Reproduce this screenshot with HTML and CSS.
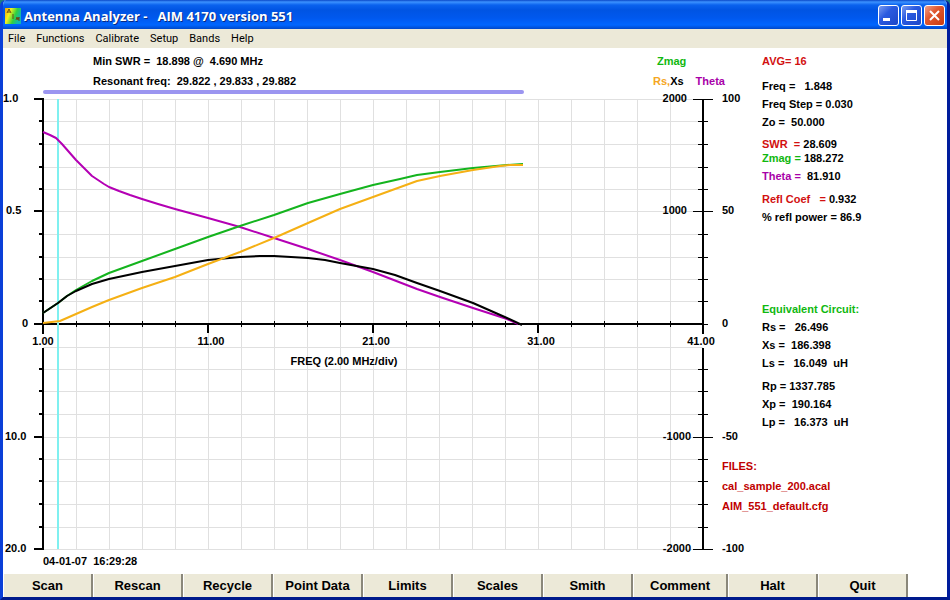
FILE: index.html
```html
<!DOCTYPE html>
<html lang="en">
<head>
    <meta charset="UTF-8">
    <meta name="viewport" content="width=device-width, initial-scale=1.0">
    <title>Antenna Analyzer - AIM 4170 version 551</title>
    <link rel="stylesheet" href="styles.css">
</head>
<body>
    <div class="window">
        <header class="titlebar">
            <svg class="app-icon" width="16" height="16" viewBox="0 0 16 16">
                <defs>
                    <linearGradient id="rainbow" x1="0" y1="0" x2="1" y2="0.4">
                        <stop offset="0" stop-color="#f0a010"/>
                        <stop offset="0.35" stop-color="#f4f020"/>
                        <stop offset="0.7" stop-color="#30d040"/>
                        <stop offset="1" stop-color="#10b8b0"/>
                    </linearGradient>
                </defs>
                <rect width="16" height="16" fill="url(#rainbow)"/>
                <path d="M2 5L4 1L6 5M3 4H5M8 6V11M11 12L12 9L13 12L14 9V13" fill="none" stroke="#6a4a10"/>
            </svg>
            <h1>Antenna Analyzer -   AIM 4170 version 551</h1>
            <div class="controls">
                <button class="ctl" aria-label="Minimize">
                    <svg width="19" height="19" viewBox="0 0 19 19"><path d="M4 13.5H11" stroke="#fff" stroke-width="3"/></svg>
                </button>
                <button class="ctl" aria-label="Maximize">
                    <svg width="19" height="19" viewBox="0 0 19 19"><path d="M4.5 5V14.5H14.5V5" fill="none" stroke="#fff"/><path d="M4 5.5H15" stroke="#fff" stroke-width="3"/></svg>
                </button>
                <button class="ctl ctl-close" aria-label="Close">
                    <svg width="19" height="19" viewBox="0 0 19 19"><path d="M5 5L14 14M14 5L5 14" stroke="#fff" stroke-width="2"/></svg>
                </button>
            </div>
        </header>

        <nav class="menu">
            <button>File</button>
            <button>Functions</button>
            <button>Calibrate</button>
            <button>Setup</button>
            <button>Bands</button>
            <button>Help</button>
        </nav>

        <main class="content">
            <section class="plot">
                <div class="plot-head">
                    <div>
                        <p>Min SWR =  18.898 @  4.690 MHz</p>
                        <p>Resonant freq:  29.822 , 29.833 , 29.882</p>
                    </div>
                    <div class="legend">
                        <p class="green legend-top">Zmag</p>
                        <p class="legend-row"><span><span class="orange">Rs,</span>Xs</span><span class="purple">Theta</span></p>
                    </div>
                </div>

                <svg class="chart" viewBox="3 90 719 462">
                    <path class="band" d="M45 92H522"/>

                    <!-- grid -->
                    <path class="grid" d="M76 99V549M109 99V549M142 99V549M175 99V549M208 99V549M241 99V549M274 99V549M307 99V549M340 99V549M373 99V549M406 99V549M439 99V549M472 99V549M505 99V549M538 99V549M571 99V549M604 99V549M637 99V549M670 99V549"/>
                    <path class="grid" d="M43 99H703M43 121H703M43 144H703M43 167H703M43 189H703M43 211H703M43 234H703M43 257H703M43 279H703M43 301H703M43 347H703M43 369H703M43 391H703M43 414H703M43 437H703M43 459H703M43 481H703M43 504H703M43 527H703M43 549H703"/>

                    <!-- left axis (SWR) -->
                    <path class="axis" d="M43 98V334M43 348V550"/>
                    <path class="axis" d="M34 99H43M34 211H43M34 324H43M34 437H43M34 549H43"/>
                    <path class="axis" d="M39 121H43M39 144H43M39 167H43M39 189H43M39 234H43M39 257H43M39 279H43M39 301H43M39 369H43M39 391H43M39 414H43M39 459H43M39 481H43M39 504H43M39 527H43"/>

                    <!-- frequency axis -->
                    <path class="axis" d="M43 324H703M208 324V333M373 324V333M538 324V333"/>
                    <path class="tick" d="M76 321V327M109 321V327M142 321V327M175 321V327M241 321V327M274 321V327M307 321V327M340 321V327M406 321V327M439 321V327M472 321V327M505 321V327M571 321V327M604 321V327M637 321V327M670 321V327"/>

                    <!-- right axis (Z / theta) -->
                    <path class="axis" d="M703 99V334M703 348V549"/>
                    <path class="tick" d="M693 99H713M693 211H713M693 437H713M693 549H713"/>
                    <path class="tick" d="M698 121H708M698 144H708M698 167H708M698 189H708M698 234H708M698 257H708M698 279H708M698 301H708M698 324H708M698 369H708M698 391H708M698 414H708M698 459H708M698 481H708M698 504H708M698 527H708"/>

                    <path class="cursor" d="M58 99V549"/>

                    <!-- traces -->
                    <polyline class="trace t-theta" points="43,132 50,135 56,138 62,144 69,152 76,160 83,167 92,176 98,180 104,184 109,187 119,191 130,195 142,199 158,204 175,209 208,218 240,227 274,238 308,249 340,260 373,272 417,289 440,297 473,308 507,319 518,324"/>
                    <polyline class="trace t-zmag" points="43,313 58,303 67,296 76,290 92,281 109,273 142,261 175,249 208,237 240,226 274,215 308,203 340,194 373,185 400,179 417,175 440,172 473,168 507,165 523,164"/>
                    <polyline class="trace t-xs" points="43,313 58,303 67,296 76,291 92,284 109,279 142,272 175,266 208,260 240,257 260,256 274,256 308,258 325,260 340,263 373,269 395,275 417,283 440,291 473,303 507,318 522,325"/>
                    <polyline class="trace t-rs" points="43,323 60,321 76,314 92,307 109,300 142,288 175,277 208,264 240,252 274,238 308,223 340,209 373,197 417,181 440,176 473,170 500,166 510,165 523,165"/>

                    <g class="labels">
                        <text x="3" y="102">1.0</text>
                        <text x="6" y="214">0.5</text>
                        <text x="22" y="327">0</text>
                        <text x="5" y="440">10.0</text>
                        <text x="5" y="552">20.0</text>
                    </g>
                    <g class="labels mid">
                        <text x="43" y="345">1.00</text>
                        <text x="211" y="345">11.00</text>
                        <text x="376" y="345">21.00</text>
                        <text x="541" y="345">31.00</text>
                        <text x="701" y="345">41.00</text>
                        <text x="344" y="365">FREQ (2.00 MHz/div)</text>
                    </g>
                    <g class="labels end">
                        <text x="687" y="102">2000</text>
                        <text x="687" y="214">1000</text>
                        <text x="691" y="440">-1000</text>
                        <text x="691" y="552">-2000</text>
                    </g>
                    <g class="labels">
                        <text x="722" y="102">100</text>
                        <text x="722" y="214">50</text>
                        <text x="722" y="327">0</text>
                        <text x="722" y="440">-50</text>
                        <text x="722" y="552">-100</text>
                    </g>
                </svg>

                <p class="stamp">04-01-07  16:29:28</p>
            </section>

            <aside class="side">
                <div class="readings">
                    <div class="group avg">
                        <p class="red">AVG= 16</p>
                    </div>
                    <div class="group setup">
                        <p>Freq =   1.848</p>
                        <p>Freq Step = 0.030</p>
                        <p>Zo =  50.000</p>
                    </div>
                    <div class="group">
                        <p class="tight"><span class="red">SWR  =</span> 28.609</p>
                        <p><span class="green">Zmag =</span> 188.272</p>
                        <p><span class="purple">Theta =</span>  81.910</p>
                    </div>
                    <div class="group">
                        <p><span class="red">Refl Coef   =</span> 0.932</p>
                        <p>% refl power = 86.9</p>
                    </div>
                    <div class="group circuit">
                        <p class="green">Equivalent Circuit:</p>
                        <p>Rs =   26.496</p>
                        <p>Xs =  186.398</p>
                        <p>Ls =   16.049  uH</p>
                    </div>
                    <div class="group">
                        <p>Rp = 1337.785</p>
                        <p>Xp =  190.164</p>
                        <p>Lp =   16.373  uH</p>
                    </div>
                </div>
                <div class="files">
                    <p>FILES:</p>
                    <p>cal_sample_200.acal</p>
                    <p>AIM_551_default.cfg</p>
                </div>
            </aside>
        </main>

        <footer class="toolbar">
            <button>Scan</button>
            <button>Rescan</button>
            <button>Recycle</button>
            <button>Point Data</button>
            <button>Limits</button>
            <button>Scales</button>
            <button>Smith</button>
            <button class="wide">Comment</button>
            <button>Halt</button>
            <button>Quit</button>
        </footer>
    </div>
</body>
</html>
```

FILE: styles.css
```css
* { box-sizing: border-box; }
body { margin: 0; font: bold 11px/18px "Liberation Sans", Arial, sans-serif; color: #000; background: #1f7f80; }
p, h1 { margin: 0; white-space: pre; }
button { font: inherit; color: inherit; border: none; padding: 0; background: none; }

.window { display: flex; flex-direction: column; min-height: 100vh; overflow: hidden; border: 3px solid #0a3fd8; border-top: none; border-right-color: #001c9c; border-bottom-color: #001a8c; border-radius: 6px 6px 0 0; background: #fff; }

.titlebar { display: flex; align-items: center; height: 29px; padding: 2px 2px 0; background: linear-gradient(#0a48c8 0, #3c92ff 2px, #0a62ee 5px, #0054e3 10px, #0058ee 18px, #0066ff 25px, #0048c8 29px); }
.app-icon { margin-right: 3px; }
.titlebar h1 { flex: 1; font: bold 13px/18px "Open Sans", "Noto Sans", sans-serif; color: #fff; text-shadow: 1px 1px #0a2a80; }
.controls { display: flex; gap: 2px; }
.ctl { display: flex; width: 21px; height: 21px; border: 1px solid #fff; border-radius: 3px; background: linear-gradient(135deg, #7a9cf0, #2a5ae0 40%, #1c48c8); }
.ctl-close { background: linear-gradient(135deg, #f0a088, #e05830 40%, #c83c10); }

.menu { display: flex; gap: 11px; height: 19px; padding: 0 5px; background: #ece9d8; }
.menu button { font: 11px/18px Roboto, "Noto Sans", sans-serif; }

.content { display: flex; flex: 1; }
.plot { flex: 1; min-width: 0; }
.plot-head { display: flex; justify-content: space-between; height: 42px; padding: 3px 0 0 90px; line-height: 20px; }
.legend { width: 69px; }
.legend-top { padding-left: 4px; }
.legend-row { display: flex; gap: 12px; }
.stamp { padding-left: 40px; }

.chart { display: block; width: 100%; overflow: visible; }
.band { stroke: #9b95f0; stroke-width: 4; stroke-linecap: round; }
.grid, .axis, .tick, .cursor { fill: none; shape-rendering: crispEdges; }
.grid { stroke: #e0e0e0; }
.axis { stroke: #000; stroke-width: 2; }
.tick { stroke: #000; }
.cursor { stroke: #7ff0f0; stroke-width: 2; }
.trace { fill: none; stroke-width: 2; stroke-linejoin: round; }
.t-theta { stroke: #b400b4; }
.t-zmag { stroke: #14b41e; }
.t-xs { stroke: #000; }
.t-rs { stroke: #f5b014; }
.labels { font-size: 11px; }
.mid { text-anchor: middle; }
.end { text-anchor: end; }

.side { width: 225px; }
.readings { padding: 4px 0 0 40px; }
.group { margin-bottom: 5px; }
.avg { margin-bottom: 7px; }
.setup { margin-bottom: 8px; }
.tight { line-height: 10px; }
.circuit { margin-top: 74px; }
.files { padding-top: 20px; line-height: 20px; color: #c00000; }

.red { color: #d21010; }
.green { color: #10b810; }
.purple { color: #a800a8; }
.orange { color: #f5a623; }

.toolbar { display: flex; height: 23px; }
.toolbar button { width: 90px; font-size: 13px; line-height: 22px; background: #ece9d8; border-right: 2px solid #8a877a; border-left: 1px solid #fff; }
.toolbar .wide { width: 95px; }
```
